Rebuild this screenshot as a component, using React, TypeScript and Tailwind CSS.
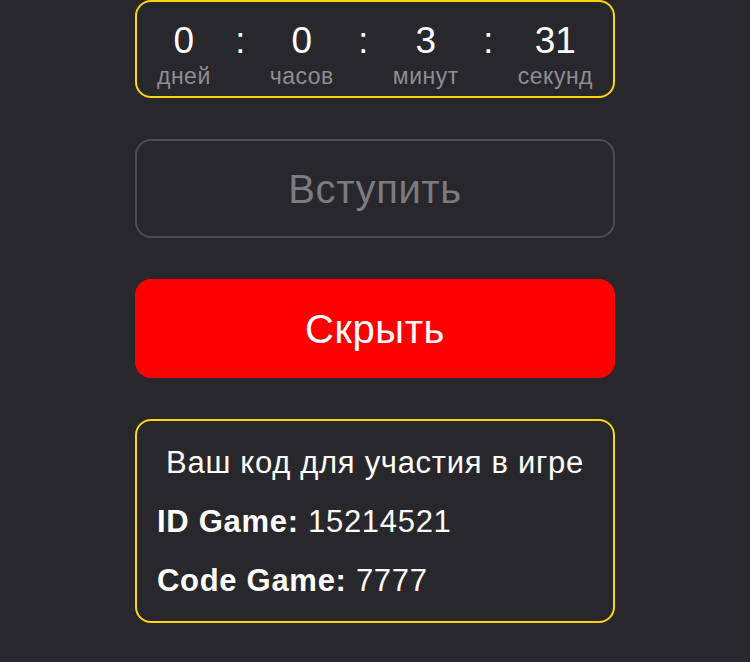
const units = [
  { value: "0", label: "дней" },
  { value: "0", label: "часов" },
  { value: "3", label: "минут" },
  { value: "31", label: "секунд" },
];

export default function App() {
  return (
    <div
      className="min-h-[662px] w-full bg-[#28272c] text-white"
      style={{ fontFamily: '"Liberation Sans", Arial, sans-serif' }}
    >
      <div className="mx-auto flex w-[480px] flex-col gap-[41px] pb-10">
        {/* countdown */}
        <div className="flex h-[98px] items-start justify-between rounded-[16px] border-2 border-[#ffd60a] px-5 pt-[16px]">
          {units.map((u, i) => (
            <div key={i} className="contents">
              {i > 0 && (
                <div className="text-[36px] leading-[46px] text-white">:</div>
              )}
              <div className="flex flex-col items-center">
                <div className="text-[37px] leading-[46px]">{u.value}</div>
                <div className="text-[23px] leading-[24px] font-light tracking-[0.5px] text-[#8e8d93]">
                  {u.label}
                </div>
              </div>
            </div>
          ))}
        </div>

        <button className="flex h-[99px] items-center justify-center rounded-[16px] border-2 border-[#4d4c52] text-[40px] tracking-[0.6px] text-[#7c7b80]">
          Вступить
        </button>

        <button className="flex h-[99px] items-center justify-center rounded-[16px] bg-[#ff0000] text-[40px] tracking-[0.6px] text-white">
          Скрыть
        </button>

        <div className="flex h-[204px] flex-col gap-[25px] rounded-[16px] border-2 border-[#ffd60a] px-5 pt-[25px] text-[31px] leading-[34px] tracking-[0.7px]">
          <div className="text-center">Ваш код для участия в игре</div>
          <div>
            <span className="font-bold">ID Game:</span> 15214521
          </div>
          <div>
            <span className="font-bold">Code Game:</span> 7777
          </div>
        </div>
      </div>
    </div>
  );
}
